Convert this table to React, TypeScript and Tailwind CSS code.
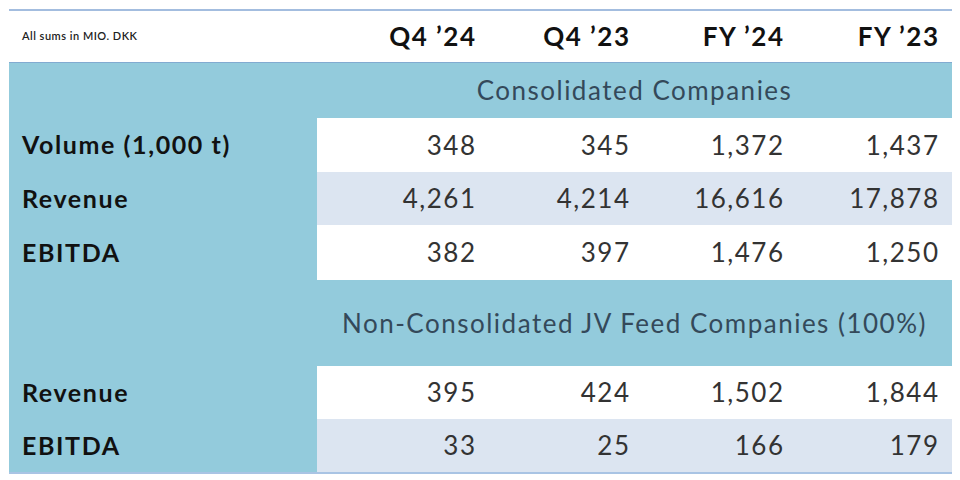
import React from "react";

type Row = { label: string; values: string[]; shade: boolean };

const consolidated: Row[] = [
  { label: "Volume (1,000 t)", values: ["348", "345", "1,372", "1,437"], shade: false },
  { label: "Revenue", values: ["4,261", "4,214", "16,616", "17,878"], shade: true },
  { label: "EBITDA", values: ["382", "397", "1,476", "1,250"], shade: false },
];

const jv: Row[] = [
  { label: "Revenue", values: ["395", "424", "1,502", "1,844"], shade: false },
  { label: "EBITDA", values: ["33", "25", "166", "179"], shade: true },
];

const headers = ["Q4 \u201924", "Q4 \u201923", "FY \u201924", "FY \u201923"];

const cols = "grid grid-cols-[308px_158px_154px_154px_169px]";

const DataRow = ({ row, height }: { row: Row; height: string }) => (
  <div className={`${cols} ${height}`}>
    <div className="flex items-center pl-[13px] text-[25px] font-bold tracking-[1.6px] text-[#111]">{row.label}</div>
    {row.values.map((v, i) => (
      <div
        key={i}
        className={`flex items-center justify-end text-[26px] tracking-[1.5px] text-[#333] ${
          row.shade ? "bg-[#dce5f1]" : "bg-white"
        } ${i === 3 ? "pr-[14px]" : "pr-0"}`}
      >
        <span className="-mr-[1.5px]">{v}</span>
      </div>
    ))}
  </div>
);

const SectionHeader = ({ title, height }: { title: string; height: string }) => (
  <div className={`${cols} ${height}`}>
    <div />
    <div className="col-span-4 flex items-center justify-center text-[26px] tracking-[1.5px] text-[#34495a]">
      {title}
    </div>
  </div>
);

export default function App() {
  return (
    <div className="w-[960px] h-[480px] bg-white pt-[9px] pl-[9px] font-['Lato',sans-serif]">
      <div className="w-[943px]">
        <div className="h-[2px] bg-[#a3bddf]" />
        {/* Column headers */}
        <div className={`${cols} h-[51px]`}>
          <div className="flex items-center pl-[13px] text-[11px] font-semibold tracking-[0.5px] text-[#222]">
            All sums in MIO. DKK
          </div>
          {headers.map((h, i) => (
            <div
              key={h}
              className={`flex items-center justify-end text-[26px] font-bold tracking-[1.5px] text-[#111] ${
                i === 3 ? "pr-[14px]" : ""
              }`}
            >
              <span className="-mr-[1.5px]">{h}</span>
            </div>
          ))}
        </div>
        <div className="border-t border-[#82abd1] bg-[#93cbdc]">
          <SectionHeader title="Consolidated Companies" height="h-[55px]" />
          <DataRow row={consolidated[0]} height="h-[54px]" />
          <DataRow row={consolidated[1]} height="h-[53px]" />
          <DataRow row={consolidated[2]} height="h-[55px]" />
          <SectionHeader title="Non-Consolidated JV Feed Companies (100%)" height="h-[86px]" />
          <DataRow row={jv[0]} height="h-[53px]" />
          <DataRow row={jv[1]} height="h-[53px]" />
        </div>
        <div className="h-[2px] bg-[#a9c4e4]" />
      </div>
    </div>
  );
}
